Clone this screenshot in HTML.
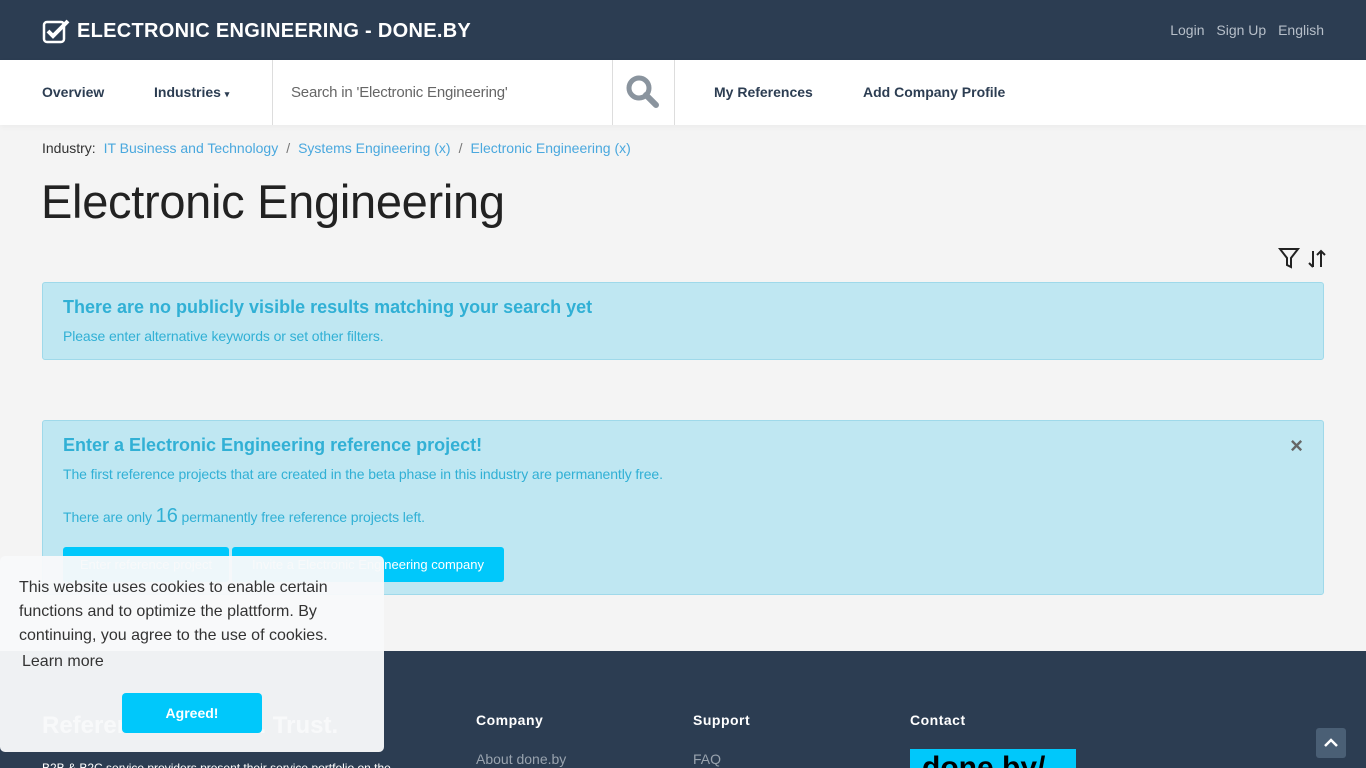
<!DOCTYPE html>
<html><head><meta charset="utf-8"><style>
*{box-sizing:border-box;margin:0;padding:0}
html,body{width:1366px;height:768px;overflow:hidden}
body{background:#f4f4f4;font-family:"Liberation Sans",sans-serif;position:relative}
.top{height:60px;background:#2c3d52;position:relative}
.brand{position:absolute;left:42px;top:18px;color:#fff;font-weight:bold;font-size:20px;letter-spacing:.3px;display:flex;align-items:center;gap:7px}
.tr{position:absolute;right:42px;top:22px;color:#b7bfc9;font-size:14px}
.tr span{margin-left:8px}
.nav{height:65px;background:#fff;position:relative;font-size:15px;color:#2c3d52;box-shadow:0 2px 6px rgba(0,0,0,.04)}
.nav .i{position:absolute;top:24px;font-weight:bold;font-size:14px}
.srch{position:absolute;left:272px;top:0;width:403px;height:65px;border-left:1px solid #ddd;border-right:1px solid #ddd}
.srch .t{position:absolute;left:18px;top:24px;color:#666;font-size:15px;letter-spacing:-.2px}
.srch .b{position:absolute;left:339px;top:0;width:1px;height:65px;background:#ddd}
.bc{position:absolute;left:42px;top:140px;font-size:14px;color:#333}
.bc a{color:#4aa8de;text-decoration:none}
.bc .s{color:#777;margin:0 8px}
h1{position:absolute;left:41px;top:174px;font-weight:300;font-size:47px;color:#222;letter-spacing:-.3px}
.al{position:absolute;left:42px;width:1282px;background:#bfe7f2;border:1px solid #9fd9ea;border-radius:3px;color:#31b0d5}
.al h3{font-size:18px;font-weight:bold;position:absolute;left:20px;top:14px}
.al p{font-size:14px;position:absolute;left:20px;letter-spacing:-.1px}
.btn{position:absolute;top:126px;height:35px;background:#00c8fb;color:#fff;font-size:13px;border-radius:3px;padding:10px 0;text-align:center;white-space:nowrap;overflow:hidden}
.foot{position:absolute;left:0;top:651px;width:1366px;height:117px;background:#2c3d52;color:#fff;overflow:hidden}
.foot h4{position:absolute;top:61px;font-size:14px;letter-spacing:.5px}
.foot .l{position:absolute;top:100px;font-size:14px;color:#99a3ae}
.ck{position:absolute;left:0;top:556px;width:384px;height:196px;background:rgba(248,249,250,.96);border-radius:5px;color:#333;font-size:16px}
</style></head><body>
<div class="top">
<div class="brand"><svg width="28" height="26" viewBox="0 0 28 26"><rect x="2" y="4" width="20" height="20" rx="3" fill="none" stroke="#fff" stroke-width="2.5"/><path d="M6 13l5 5L26 3" fill="none" stroke="#fff" stroke-width="4"/></svg>ELECTRONIC ENGINEERING - DONE.BY</div>
<div class="tr"><span>Login</span> <span>Sign Up</span> <span>English</span></div>
</div>
<div class="nav">
<div class="i" style="left:42px">Overview</div>
<div class="i" style="left:154px">Industries <span style="font-size:9px">▾</span></div>
<div class="srch"><div class="t">Search in 'Electronic Engineering'</div><div class="b"></div>
<svg style="position:absolute;left:352px;top:14px" width="36" height="36" viewBox="0 0 36 36"><circle cx="14" cy="14" r="10" fill="none" stroke="#8a949e" stroke-width="5"/><path d="M21 21l10 10" stroke="#8a949e" stroke-width="6" stroke-linecap="round"/></svg></div>
<div class="i" style="left:714px">My References</div>
<div class="i" style="left:863px">Add Company Profile</div>
</div>
<div class="bc">Industry: <a style="margin-left:4px">IT Business and Technology</a><span class="s">/</span><a>Systems Engineering (x)</a><span class="s">/</span><a>Electronic Engineering (x)</a></div>
<h1>Electronic Engineering</h1>
<svg style="position:absolute;left:1278px;top:247px" width="48" height="22" viewBox="0 0 48 22"><path d="M2 2h18l-7 9v9l-4-2v-7z" fill="none" stroke="#222" stroke-width="2"/><path d="M35 4v16M31 16l4 4M43 20V4M39 8l4-4 4 4" fill="none" stroke="#222" stroke-width="2"/></svg>
<div class="al" style="top:282px;height:78px"><h3>There are no publicly visible results matching your search yet</h3><p style="top:45px">Please enter alternative keywords or set other filters.</p></div>
<div class="al" style="top:420px;height:175px"><h3>Enter a Electronic Engineering reference project!</h3>
<span style="position:absolute;right:20px;top:12px;font-size:22px;color:#666;font-weight:bold">×</span>
<p style="top:45px">The first reference projects that are created in the beta phase in this industry are permanently free.</p>
<p style="top:84px">There are only <span style="font-size:20px">16</span> permanently free reference projects left.</p>
<div class="btn" style="left:20px;width:166px">Enter reference project</div><div class="btn" style="left:189px;width:272px">Invite a Electronic Engineering company</div></div>
<div class="foot">
<div style="position:absolute;left:42px;top:61px;font-size:24px;font-weight:bold">References. Create. Trust.</div>
<div style="position:absolute;left:42px;top:110px;font-size:12px">B2B &amp; B2C service providers present their service portfolio on the</div>
<h4 style="left:476px;top:61px">Company</h4><div class="l" style="left:476px">About done.by</div>
<h4 style="left:693px;top:61px">Support</h4><div class="l" style="left:693px">FAQ</div>
<h4 style="left:910px;top:61px">Contact</h4>
<div style="position:absolute;left:910px;top:98px;width:166px;height:30px;background:#00c8fb;color:#000;font-size:30px;font-weight:bold;padding-left:12px;line-height:38px">done.by/</div>
<div style="position:absolute;left:1316px;top:77px;width:30px;height:30px;background:#4a5f75;border-radius:3px"><svg width="30" height="30"><path d="M9 18l6-6 6 6" stroke="#fff" stroke-width="2.5" fill="none"/></svg></div>
</div>
<div class="ck"><div style="position:absolute;left:19px;top:20px;width:330px;line-height:24px">This website uses cookies to enable certain functions and to optimize the plattform. By continuing, you agree to the use of cookies.</div>
<div style="position:absolute;left:22px;top:97px">Learn more</div>
<div style="position:absolute;left:122px;top:137px;width:140px;height:40px;background:#00c8fb;color:#fff;border-radius:4px;font-weight:bold;font-size:14px;text-align:center;line-height:40px">Agreed!</div></div>
</body></html>
